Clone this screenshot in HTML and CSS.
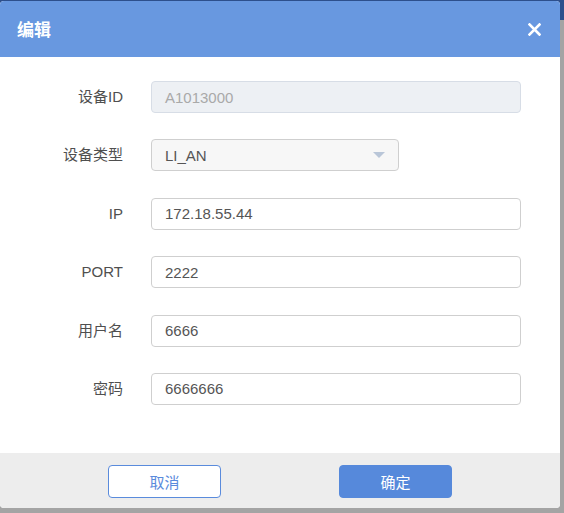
FILE: index.html
```html
<!DOCTYPE html>
<html lang="zh">
<head>
<meta charset="utf-8">
<title>编辑</title>
<link rel="stylesheet" href="styles.css">
</head>
<body>
<div class="dialog">
  <div class="dialog-header">
    <span class="dialog-title">编辑</span>
    <span class="close" aria-label="关闭">
      <svg width="13" height="13" viewBox="0 0 13 13"><path d="M1.5 1.5 L11.5 11.5 M11.5 1.5 L1.5 11.5" stroke="#fff" stroke-width="2.6" stroke-linecap="square"/></svg>
    </span>
  </div>
  <div class="dialog-body">
    <label class="label">设备ID</label>
    <div class="field field-disabled">A1013000</div>

    <label class="label">设备类型</label>
    <div class="field field-select">
      <span>LI_AN</span>
      <span class="caret"></span>
    </div>

    <label class="label">IP</label>
    <div class="field">172.18.55.44</div>

    <label class="label">PORT</label>
    <div class="field">2222</div>

    <label class="label">用户名</label>
    <div class="field">6666</div>

    <label class="label">密码</label>
    <div class="field">6666666</div>
  </div>
  <div class="dialog-footer">
    <button class="btn btn-cancel">取消</button>
    <button class="btn btn-ok">确定</button>
  </div>
</div>
</body>
</html>
```
FILE: styles.css
```css
html, body {
  margin: 0;
  padding: 0;
}
body {
  width: 564px;
  height: 513px;
  overflow: hidden;
  background: linear-gradient(to bottom, #2d4f8c 0, #2d4f8c 20px, #a4a4a4 20px, #a4a4a4 100%);
  font-family: "Liberation Sans", "Noto Sans CJK SC", sans-serif;
  font-size: 15px;
  color: #555;
}
.dialog {
  width: 560px;
  margin-top: 1px;
  background: #fff;
  border-radius: 4px;
  overflow: hidden;
  display: flex;
  flex-direction: column;
}
.dialog-header {
  height: 56px;
  background: #6898e0;
  display: flex;
  align-items: center;
  justify-content: space-between;
  padding: 0 17px 0 17px;
  box-sizing: border-box;
}
.dialog-title {
  color: #fff;
  font-weight: bold;
  font-size: 17px;
  font-family: "Noto Sans CJK SC", sans-serif;
  margin-top: -1px;
}
.close {
  display: flex;
  width: 13px;
  height: 13px;
  margin-right: 2px;
}
.dialog-body {
  display: grid;
  grid-template-columns: 123px 370px;
  column-gap: 28px;
  row-gap: 26.4px;
  padding: 24px 0 48px 0;
  align-items: center;
}
.label {
  text-align: right;
  color: #4f4f4f;
  font-size: 15px;
  line-height: 20px;
}
.field {
  height: 32px;
  box-sizing: border-box;
  border: 1px solid #cfcfcf;
  border-radius: 4px;
  padding: 0 13px;
  display: flex;
  align-items: center;
  color: #555;
  background: #fff;
}
.field-disabled {
  background: #edf0f4;
  border-color: #d7dde6;
  color: #a9a9a9;
}
.field-select {
  width: 248px;
  background: #f7f7f7;
  justify-content: space-between;
}
.caret {
  width: 0;
  height: 0;
  border-left: 6px solid transparent;
  border-right: 6px solid transparent;
  border-top: 6px solid #b9c6d8;
}
.dialog-footer {
  height: 55px;
  background: #ededed;
  display: flex;
  justify-content: center;
  align-items: flex-start;
  gap: 118px;
  padding-top: 12px;
  box-sizing: border-box;
}
.btn {
  width: 113px;
  height: 33px;
  border-radius: 4px;
  font-family: "Noto Sans CJK SC", sans-serif;
  font-size: 15px;
  cursor: pointer;
  padding: 0;
}
.btn-cancel {
  background: #fff;
  border: 1px solid #5a8bdc;
  color: #5a8bdc;
}
.btn-ok {
  background: #5689db;
  border: 1px solid #5689db;
  color: #fff;
}
```
